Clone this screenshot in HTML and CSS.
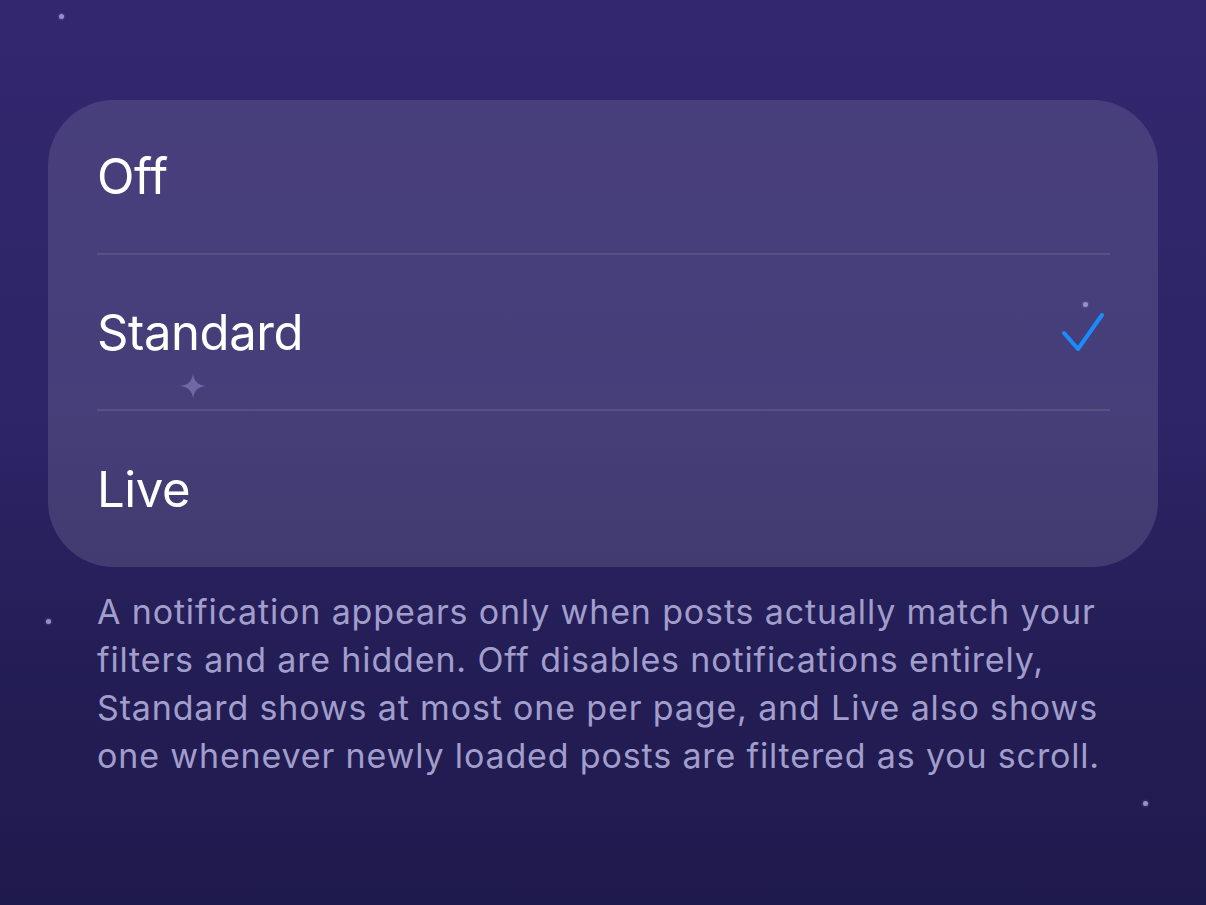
FILE: index.html
```html
<!DOCTYPE html>
<html lang="en">
<head>
  <meta charset="UTF-8">
  <meta name="viewport" content="width=device-width, initial-scale=1.0">
  <title>Notifications</title>
  <link rel="stylesheet" href="styles.css">
</head>
<body>
  <!-- tło: gwiazdki -->
  <span class="dot" style="left:59px; top:14px"></span>
  <span class="dot" style="left:46px; top:619px"></span>
  <span class="dot" style="left:1083px; top:302px"></span>
  <span class="dot" style="left:1143px; top:801px"></span>

  <div class="card">
    <div class="row">Off</div>
    <div class="row selected">
      <span>Standard</span>
      <svg class="check" width="46" height="44" viewBox="0 0 46 44">
        <path d="M4 22 L18 38 L42 4" fill="none" stroke="#1a8cff" stroke-width="4" stroke-linecap="round" stroke-linejoin="round"/>
      </svg>
      <svg class="sparkle" width="26" height="26" viewBox="0 0 26 26">
        <path d="M13 0 Q14 12 26 13 Q14 14 13 26 Q12 14 0 13 Q12 12 13 0 Z" fill="#6f68a6"/>
      </svg>
    </div>
    <div class="row last">Live</div>
  </div>

  <p class="note">A notification appears only when posts actually match your filters and are hidden. Off disables notifications entirely, Standard shows at most one per page, and Live also shows one whenever newly loaded posts are filtered as you scroll.</p>
</body>
</html>
```

FILE: styles.css
```css
body {
  margin: 0;
  padding: 100px 48px 0;
  min-height: 905px;
  box-sizing: border-box;
  font-family: Inter, "Noto Sans", sans-serif;
  background: linear-gradient(180deg, #33276f 0%, #2d2567 45%, #231d55 75%, #1f1a4d 100%);
  color: #fff;
  position: relative;
  overflow: hidden;
}

.dot {
  position: absolute;
  width: 5px; height: 5px;
  border-radius: 50%;
  background: #9690c8;
  box-shadow: 0 0 3px rgba(150,144,200,0.6);
}

.card {
  width: 1110px;
  border-radius: 66px;
  background: linear-gradient(180deg, rgba(255,255,255,0.11), rgba(255,255,255,0.12));
  padding: 0 48px 0 49px;
  box-sizing: border-box;
}

.row {
  height: 153px;
  display: flex;
  align-items: center;
  justify-content: space-between;
  font-size: 49px;
  letter-spacing: -0.4px;
  border-bottom: 2px solid rgba(130,128,140,0.3);
  position: relative;
}
.row.selected { height: 154px; }
.row.last { height: 156px; border-bottom: none; }

.check { margin-right: 4px; margin-top: 2px; }

.sparkle {
  position: absolute;
  left: 83px;
  top: 118px;
}

.note {
  margin: 21px 0 0 49px;
  width: 1012px;
  font-size: 34px;
  line-height: 48px;
  letter-spacing: 0.85px;
  color: #a29ecc;
}
```
